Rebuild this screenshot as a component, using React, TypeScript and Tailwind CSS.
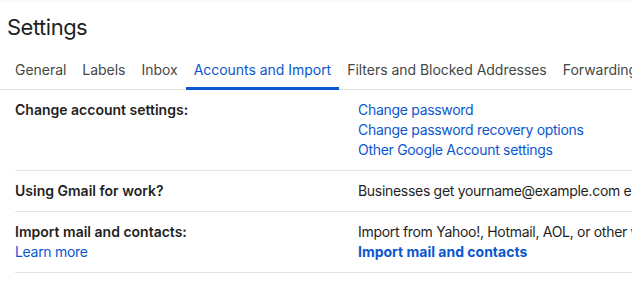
const tabs = ["General", "Labels", "Inbox", "Accounts and Import", "Filters and Blocked Addresses", "Forwarding and POP/IMAP"];

function Row({ label, children, sub }: { label: string; children: React.ReactNode; sub?: React.ReactNode }) {
  return (
    <div className="flex border-b border-[#e3e3e3] py-[10px] text-[14px] leading-[20px]">
      <div className="w-[343px] shrink-0">
        <div className="font-semibold text-[#1f1f1f]">{label}</div>
        {sub}
      </div>
      <div className="whitespace-nowrap">{children}</div>
    </div>
  );
}

export default function App() {
  return (
    <div className="h-[281px] w-[632px] overflow-hidden bg-white font-['Inter',sans-serif]">
      <div className="h-[2px] bg-[#f8fafd]" />
      <h1 className="pl-[7px] pt-[11px] text-[22px] leading-[28px] tracking-[-0.5px] text-[#1f1f1f]">Settings</h1>
      <div className="mt-[19px] flex border-b border-[#e3e3e3] pl-[7px] whitespace-nowrap">
        {tabs.map((t) => {
          const active = t === "Accounts and Import";
          return (
            <div
              key={t}
              className={`-mb-px border-b-[3px] px-2 pb-[7px] text-[14px] leading-[20px] tracking-[-0.03px] ${active ? "border-[#0b57d0] text-[#0b57d0]" : "border-transparent text-[#444746]"}`}
            >
              {t}
            </div>
          );
        })}
      </div>
      <div className="pl-[15px]">
        <Row label="Change account settings:">
          <div className="tracking-[-0.3px] text-[#0b57d0]">Change password</div>
          <div className="tracking-[-0.3px] text-[#0b57d0]">Change password recovery options</div>
          <div className="tracking-[-0.3px] text-[#0b57d0]">Other Google Account settings</div>
        </Row>
        <Row label="Using Gmail for work?">
          <div className="tracking-[-0.3px] text-[#1f1f1f]">Businesses get yourname@example.com email, more storage, and admin tools with Google Workspace.</div>
        </Row>
        <Row label="Import mail and contacts:" sub={<div className="tracking-[-0.3px] text-[#0b57d0]">Learn more</div>}>
          <div className="tracking-[-0.3px] text-[#1f1f1f]">Import from Yahoo!, Hotmail, AOL, or other webmail or POP3 accounts.</div>
          <div className="font-bold text-[#0b57d0]">Import mail and contacts</div>
        </Row>
      </div>
    </div>
  );
}
